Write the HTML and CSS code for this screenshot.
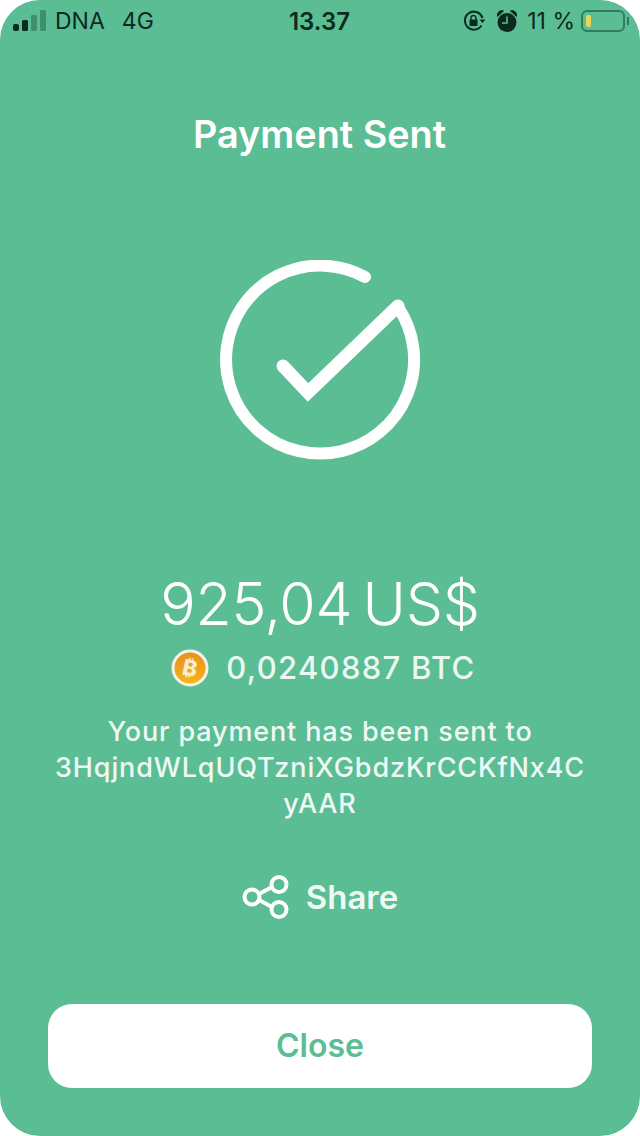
FILE: index.html
```html
<!doctype html>
<html>
<head>
    <meta charset="utf-8" />
    <title>Payment Sent</title>
    <link rel="stylesheet" href="styles.css">
</head>
<body>
    <div class="screen">
        <div class="status">
            <div class="status-side">
                <svg class="signal" width="34" height="24" viewBox="0 0 34 24">
                    <rect x="0" y="15" width="6" height="7" rx="2" fill="#0c2a1f"/>
                    <rect x="9" y="11" width="6" height="11" rx="1.5" fill="#0c2a1f"/>
                    <rect x="18" y="6" width="6" height="16" rx="1" fill="#3f8f6f"/>
                    <rect x="27" y="1" width="6" height="21" rx="1" fill="#3f8f6f"/>
                </svg>
                <span class="carrier">DNA</span>
                <span class="net">4G</span>
            </div>
            <div class="clock">13.37</div>
            <div class="status-side status-right">
                <svg class="lock" width="22" height="22" viewBox="0 0 22 22">
                    <path d="M18.5 15.5A9 9 0 1 1 19.5 8" fill="none" stroke="#0c2a1f" stroke-width="2"/>
                    <path d="M16.5 9.5h6l-3 3.5z" fill="#0c2a1f"/>
                    <rect x="6.5" y="9.5" width="8" height="6.500" rx="1" fill="#0c2a1f"/>
                    <path d="M8 10V8a2.500 2.500 0 0 1 5 0v2" fill="none" stroke="#0c2a1f" stroke-width="1.400"/>
                </svg>
                <svg class="alarm" width="20" height="24" viewBox="0 0 20 24">
                    <circle cx="10" cy="13.500" r="9.500" fill="#0c2a1f"/>
                    <path d="M0.500 7.500a4.500 4.500 0 0 1 6-5.500zM19.500 7.500a4.500 4.500 0 0 0-6-5.500z" fill="#0c2a1f" stroke="#0c2a1f"/>
                    <path d="M10 7.500v6.500H5" fill="none" stroke="#5bbd94" stroke-width="1.600"/>
                </svg>
                <span class="percent">11 %</span>
                <div class="battery"><div class="battery-level"></div></div>
                <div class="battery-tip"></div>
            </div>
        </div>

        <h1 class="title">Payment Sent</h1>

        <svg class="check" width="200" height="200" viewBox="220 260 200 200">
            <path d="M365 277A94 94 0 1 0 398 307" fill="none" stroke="#fff" stroke-width="12" stroke-linecap="round"/>
            <path d="M283 366L308 392.500L398 306" fill="none" stroke="#fff" stroke-width="13" stroke-linecap="round"/>
        </svg>

        <div class="amount">925,04 US$</div>
        <div class="crypto">
            <span class="coin">
                <svg width="38" height="38" viewBox="0 0 38 38">
                    <defs>
                        <linearGradient id="coinfill" x1="0" y1="0" x2="0" y2="1">
                            <stop offset="0" stop-color="#e58f22"/>
                            <stop offset="1" stop-color="#f6b814"/>
                        </linearGradient>
                    </defs>
                    <circle cx="19" cy="19" r="17" fill="url(#coinfill)" stroke="#f3f3ea" stroke-width="3"/>
                    <text x="19" y="27" text-anchor="middle" transform="rotate(12 19 19)" class="coin-mark">₿</text>
                </svg>
            </span>
            <span class="btc">0,0240887 BTC</span>
        </div>

        <p class="message">Your payment has been sent to<br>3HqjndWLqUQTzniXGbdzKrCCKfNx4C<br>yAAR</p>

        <div class="share">
            <svg width="48" height="44" viewBox="0 0 48 44">
                <circle cx="10" cy="22" r="7.500" fill="none" stroke="#fff" stroke-width="4"/>
                <circle cx="37" cy="9.500" r="7.500" fill="none" stroke="#fff" stroke-width="4"/>
                <circle cx="37" cy="34.500" r="7.500" fill="none" stroke="#fff" stroke-width="4"/>
                <path d="M17 19L30 12M17 25L30 32" fill="none" stroke="#fff" stroke-width="4"/>
            </svg>
            <span>Share</span>
        </div>

        <a class="close" href="#">Close</a>
    </div>
</body>
</html>
```

FILE: styles.css
```css
html, body {
    margin: 0;
    padding: 0;
    background: #fff;
}
body {
    font-family: Inter, "Noto Sans", sans-serif;
}
.screen {
    width: 640px;
    height: 1136px;
    box-sizing: border-box;
    background-color: #5bbd94;
    border-radius: 40px;
    display: flex;
    flex-direction: column;
    align-items: center;
    overflow: hidden;
    color: #fff;
}
.status {
    width: 100%;
    height: 42px;
    box-sizing: border-box;
    padding: 0 11px 0 13px;
    display: flex;
    align-items: center;
    justify-content: space-between;
    color: #0c2a1f;
    font-size: 23px;
}
.status-side {
    width: 200px;
    display: flex;
    align-items: center;
}
.status-right {
    justify-content: flex-end;
}
.signal {
    margin-right: 8px;
}
.net {
    margin-left: 17px;
}
.clock {
    font-size: 24px;
    font-weight: 600;
    margin-right: 3px;
}
.alarm {
    margin-left: 12px;
}
.percent {
    margin-left: 10px;
}
.battery {
    width: 44px;
    height: 22px;
    margin-left: 6px;
    box-sizing: border-box;
    border: 2px solid #2f7d5e;
    border-radius: 6px;
    padding: 3px;
}
.battery-level {
    width: 5px;
    height: 100%;
    border-radius: 2px;
    background-color: #e6d85a;
}
.battery-tip {
    width: 2px;
    height: 8px;
    margin-left: 2px;
    background-color: #2f7d5e;
}
.title {
    margin: 70px 0 0;
    font-size: 37.800px;
    line-height: 44px;
    font-weight: 600;
    margin-right: 1px;
}
.check {
    display: block;
    margin-top: 104px;
}
.amount {
    margin-top: 109px;
    font-size: 59px;
    line-height: 70px;
    font-weight: 350;
    letter-spacing: -0.3px;
    word-spacing: -6px;
}
.crypto {
    margin-top: 9px;
    margin-left: 7px;
    display: flex;
    align-items: center;
    gap: 17px;
    color: #eaf8f2;
}
.coin {
    display: flex;
}
.coin-mark {
    font-family: Inter, "DejaVu Sans", sans-serif;
    font-size: 22px;
    font-weight: 800;
    fill: #fdeccb;
}
.btc {
    font-size: 31px;
    line-height: 40px;
    font-weight: 450;
    letter-spacing: 1.300px;
}
.message {
    margin: 26px 0 0;
    font-size: 27px;
    line-height: 36px;
    font-weight: 500;
    text-align: center;
    color: #eef9f4;
    letter-spacing: 0.87px;
}
.share {
    margin-top: 53px;
    display: flex;
    align-items: center;
    gap: 16px;
    font-size: 33px;
    line-height: 44px;
    font-weight: 600;
    color: #eef9f4;
}
.close {
    margin-top: 85px;
    width: 544px;
    height: 84px;
    border-radius: 24px;
    background-color: #fff;
    color: #5bbd94;
    font-size: 32px;
    font-weight: 600;
    line-height: 84px;
    text-align: center;
    text-decoration: none;
}
```
